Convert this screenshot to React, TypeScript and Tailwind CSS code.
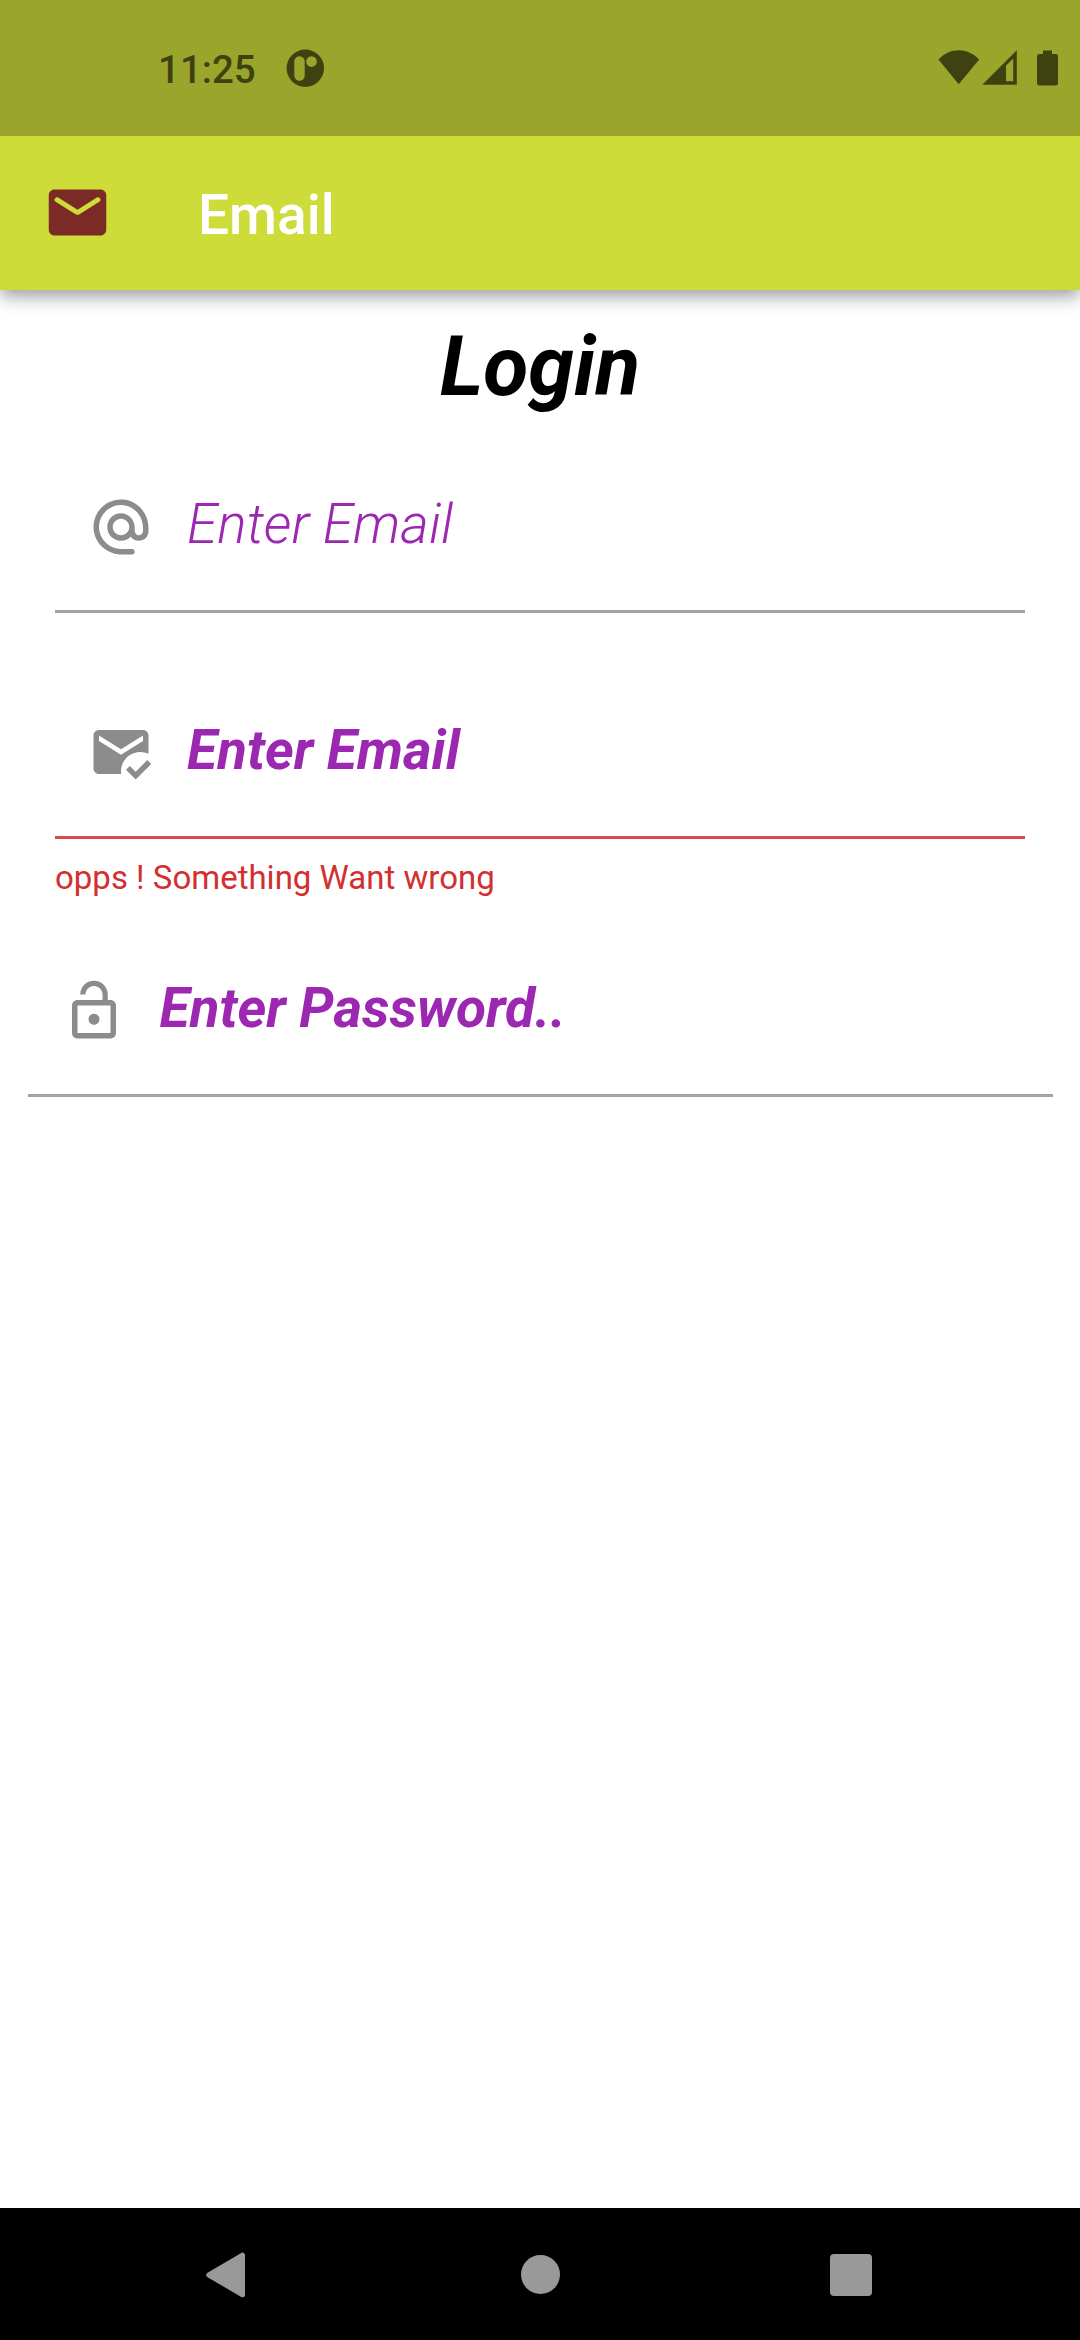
import React from "react";

const paths = {
  mail: "M20 4H4c-1.1 0-2 .9-2 2v12c0 1.1.9 2 2 2h16c1.1 0 2-.9 2-2V6c0-1.1-.9-2-2-2zm-.4 4.25l-7.07 4.42c-.32.2-.74.2-1.06 0L4.4 8.25c-.25-.16-.4-.43-.4-.72 0-.67.73-1.07 1.3-.72L12 11l6.7-4.19c.57-.35 1.3.05 1.3.72 0 .29-.15.56-.4.72z",
  at: "M12.72 2.03C6.63 1.6 1.6 6.63 2.03 12.72 2.39 18.01 7.01 22 12.31 22H16c.55 0 1-.45 1-1s-.45-1-1-1h-3.67c-3.73 0-7.15-2.42-8.08-6.03-1.49-5.8 3.91-11.21 9.71-9.71C17.58 5.18 20 8.6 20 12.33v1.1c0 .79-.71 1.57-1.5 1.57s-1.5-.78-1.5-1.57v-1.25c0-2.51-1.78-4.77-4.26-5.12-3.4-.49-6.27 2.45-5.66 5.87.34 1.91 1.83 3.49 3.72 3.94 1.84.43 3.59-.16 4.74-1.33.89 1.22 2.67 1.86 4.3 1.21 1.34-.53 2.16-1.9 2.16-3.34v-1.09c0-5.31-3.99-9.93-9.28-10.29zM12 15c-1.66 0-3-1.34-3-3s1.34-3 3-3 3 1.34 3 3-1.34 3-3 3z",
  mailRead:
    "M12 19c0-3.87 3.13-7 7-7 1.08 0 2.09.25 3 .68V6c0-1.1-.9-2-2-2H4c-1.1 0-2 .9-2 2v12c0 1.1.9 2 2 2h8.08c-.05-.33-.08-.66-.08-1zM4 6l8 5 8-5v2l-8 5-8-5V6zm13.34 16l-3.54-3.54 1.41-1.41 2.12 2.12 4.24-4.24L23 16.34 17.34 22z",
  lockOpen:
    "M12 17c1.1 0 2-.9 2-2s-.9-2-2-2-2 .9-2 2 .9 2 2 2zm6-9h-1V6c0-2.76-2.24-5-5-5S7 3.24 7 6h1.9c0-1.71 1.39-3.1 3.1-3.1 1.71 0 3.1 1.39 3.1 3.1v2H6c-1.1 0-2 .9-2 2v10c0 1.1.9 2 2 2h12c1.1 0 2-.9 2-2V10c0-1.1-.9-2-2-2zm0 12H6V10h12v10z",
};

function Icon({ d, className }: { d: string; className: string }) {
  return (
    <svg viewBox="0 0 24 24" fill="currentColor" className={className}>
      <path d={d} />
    </svg>
  );
}

function StatusBar() {
  return (
    <div className="relative z-10 flex h-[136px] items-start bg-[#9aa52b] text-[#3e4211]">
      <span className="ml-[158px] mt-[47px] w-[128px] text-[38.5px] font-medium leading-[46px]">11:25</span>
      <svg viewBox="0 0 38 38" className="mt-[49px] size-[38px]">
        <circle cx="19.3" cy="19.2" r="18.7" fill="currentColor" />
        <rect x="8.3" y="7.3" width="10.4" height="24.4" rx="5.2" fill="#9aa52b" />
        <circle cx="25.5" cy="12.6" r="5.3" fill="#9aa52b" />
      </svg>
      <div className="ml-auto mr-[22px] mt-[50px] flex items-start">
        <svg viewBox="0 0 42 35" fill="currentColor" className="h-[35px] w-[42px]">
          <path d="M0.5 9.6C6 3.6 13 0.3 20.7 0.3S35.5 3.6 41.2 9.6L20.7 34.3Z" />
        </svg>
        <svg viewBox="0 0 35 35" fill="currentColor" fillRule="evenodd" className="ml-[2px] size-[35px]">
          <path d="M0.3 34.8L34.8 0.3V34.8ZM24 15.6V31.3H31.2V8.8Z" />
        </svg>
        <svg viewBox="0 0 21 36" fill="currentColor" className="ml-[20px] h-[36px] w-[21px]">
          <path d="M6 0.5H15V4H18.8Q21 4 21 6.2V33.3Q21 35.5 18.8 35.5H2.2Q0 35.5 0 33.3V6.2Q0 4 2.2 4H6Z" />
        </svg>
      </div>
    </div>
  );
}

function AppBar() {
  return (
    <header className="relative flex h-[154px] items-center bg-[#cddc39] shadow-[0_5.5px_11px_-2.75px_rgba(0,0,0,0.2),0_11px_13.75px_0_rgba(0,0,0,0.14),0_2.75px_27.5px_0_rgba(0,0,0,0.12)]">
      <div className="flex w-[154px] justify-center pb-px">
        <Icon d={paths.mail} className="size-[69px] text-[#7b2a26]" />
      </div>
      <h1 className="ml-[44px] pt-[4px] text-[55px] font-medium leading-[64px] text-white">Email</h1>
    </header>
  );
}

type FieldProps = { icon: string; hint: string; rowClass: string; hintClass: string; error?: string };

function Field({ icon, hint, rowClass, hintClass, error }: FieldProps) {
  return (
    <div>
      <div className={"flex items-end " + rowClass}>
        <Icon d={icon} className="size-[66px] shrink-0 text-[#8c8c8c]" />
        <span className={"text-[55px] italic leading-[64px] text-[#9c27b0] " + hintClass}>{hint}</span>
      </div>
      {error && <p className="mt-[19px] text-[33px] leading-[39px] text-[#d32f2f]">{error}</p>}
    </div>
  );
}

function NavBar() {
  return (
    <nav className="flex h-[132px] items-center bg-black pl-[206px] pt-px text-[#999]">
      <svg viewBox="0 0 39 46" fill="currentColor" stroke="currentColor" strokeWidth="5" strokeLinejoin="round" className="h-[46px] w-[39px]">
        <path d="M2.8 23L36.5 3.2V42.8Z" />
      </svg>
      <div className="ml-[276px] size-[39px] rounded-full bg-[#999]" />
      <div className="ml-[270px] size-[42px] rounded-[4px] bg-[#999]" />
    </nav>
  );
}

export default function App() {
  return (
    <div className="flex h-[2340px] w-[1080px] flex-col bg-white font-['Roboto',sans-serif]">
      <StatusBar />
      <AppBar />
      <main className="flex-1">
        <h2 className="h-[125px] pt-[29px] text-center text-[82.5px] font-bold italic leading-[96px] text-black">Login</h2>
        <div className="px-[55px]">
          <Field
            icon={paths.at}
            hint="Enter Email"
            rowClass="h-[198px] border-b-[3px] border-[#a3a3a3] pb-[50px] pl-[33px]"
            hintClass="mb-[4px] ml-[33px] font-light"
          />
          <Field
            icon={paths.mailRead}
            hint="Enter Email"
            rowClass="h-[226px] border-b-[3px] border-[#d94a4a] pb-[51px] pl-[33px]"
            hintClass="mb-[3px] ml-[33px] font-bold"
            error="opps ! Something Want wrong"
          />
        </div>
        <div className="px-[27.5px]">
          <Field
            icon={paths.lockOpen}
            hint="Enter Password.."
            rowClass="h-[200px] border-b-[3px] border-[#a3a3a3] pb-[50px] pl-[33px]"
            hintClass="mb-[4px] ml-[33px] font-bold"
          />
        </div>
      </main>
      <NavBar />
    </div>
  );
}
